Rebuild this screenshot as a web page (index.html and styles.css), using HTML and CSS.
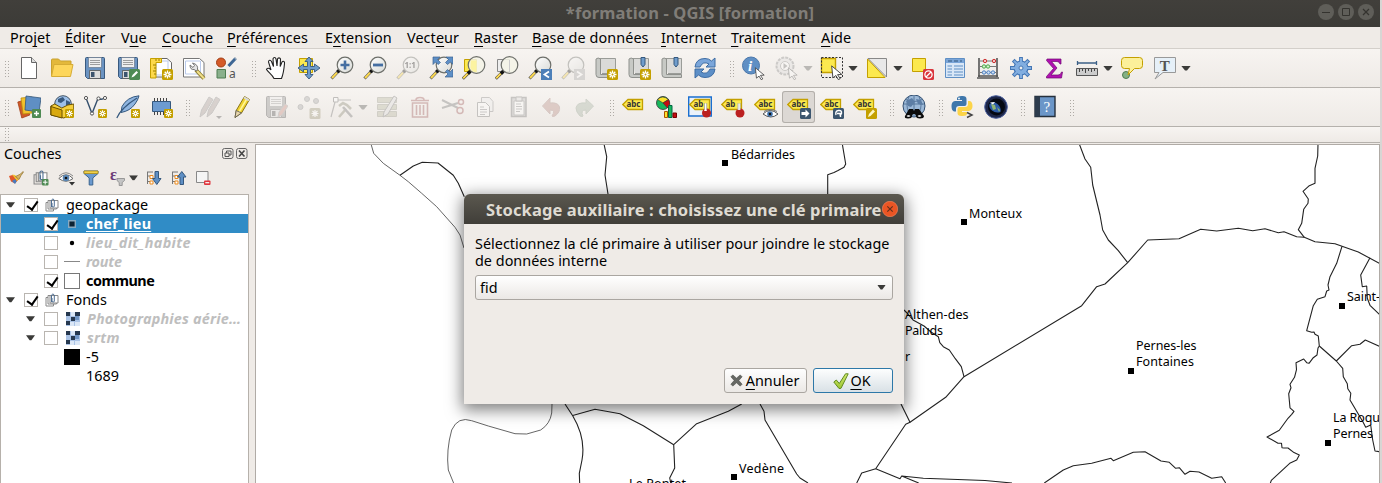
FILE: index.html
```html
<!DOCTYPE html>
<html lang="fr">
<head>
<meta charset="utf-8">
<title>*formation - QGIS [formation]</title>
<link rel="stylesheet" href="styles.css">
</head>
<body>
<svg class="defs" width="0" height="0">
  <defs>
    <linearGradient id="lens" x1="0" y1="0" x2="1" y2="1"><stop offset="0" stop-color="#fff"/><stop offset="1" stop-color="#d8dad6"/></linearGradient>
    <linearGradient id="tick" x1="0" y1="0" x2="0" y2="1"><stop offset="0" stop-color="#d3ea72"/><stop offset="1" stop-color="#9cc531"/></linearGradient>
    <symbol id="star" viewBox="0 0 11 11"><rect width="11" height="11" rx="1.5" fill="#c4a000"/><path d="M5.5 1.5v8M1.5 5.5h8M2.7 2.7l5.6 5.6M8.3 2.7L2.7 8.3" stroke="#fff" stroke-width="1.3"/><circle cx="5.5" cy="5.5" r="1" fill="#c4a000"/></symbol>
    <symbol id="mag" viewBox="0 0 24 24"><path d="M1.500 22.500l7-7.500" stroke="#555" stroke-width="3"/><path d="M2 22l5-5.400" stroke="#fcd94f" stroke-width="2"/><path d="M7.500 16l2-2" stroke="#111" stroke-width="3.400"/><circle cx="15" cy="9" r="7.800" fill="url(#lens)" stroke="#6d6f6a" stroke-width="1.200"/></symbol>
    <symbol id="magbig" viewBox="0 0 24 24"><path d="M.8 22.800l7-7" stroke="#444" stroke-width="3"/><path d="M1.200 22.400l4.500-4.800" stroke="#fcd94f" stroke-width="2"/><path d="M6 17.500l2.500-2.500" stroke="#111" stroke-width="3.400"/><circle cx="14.500" cy="9" r="8.300" fill="#f4f4e8" fill-opacity=".85" stroke="#6d6f6a" stroke-width="1.200"/></symbol>
    <symbol id="floppy" viewBox="0 0 24 24"><path d="M2.500 2.500q0-1 1-1h17q1 0 1 1v20h-17l-2-2z" fill="#6b93c1" stroke="#39597e"/><path d="M5.500 1.500h13v10h-13z" fill="#eee" stroke="#68798c" stroke-width=".7"/><path d="M7 4.500h10M7 6.500h10M7 8.500h10" stroke="#888" stroke-width=".8"/><path d="M6.500 14.500h11v8h-11z" fill="#ddd" stroke="#555" stroke-width=".8"/><path d="M8 16h3.500v5H8z" fill="#3c546e"/></symbol>
    <symbol id="tag" viewBox="0 0 24 24"><path d="M.8 9.500L6 4.500h14.500v10H6z" fill="#fce94f" stroke="#c4a000" stroke-width="1.300"/></symbol>
    <symbol id="cursor" viewBox="0 0 12 14"><path d="M1 .8l9.500 8-4 .2 2.500 3.800-1.800.8L5 9.800 2.200 12z" fill="#fff" stroke="#444" stroke-width=".9"/></symbol>
    <symbol id="book" viewBox="0 0 24 24"><path d="M5 2.500h16.500v15H8" fill="#dadad8" stroke="#9a9c98"/><path d="M2 3q2-2 4.500 0v15.500h15v3H5q-3 0-3-3z" fill="#c7c9c5" stroke="#8f918d"/></symbol>
    <symbol id="group" viewBox="0 0 14 14"><path d="M3 4.500H1v8.500h7.500v-2M5 2.500H3v8.500h8.500V9" fill="none" stroke="#888"/><path d="M5 2.500h8v7.500H5z" fill="#fff" stroke="#888"/><path d="M7 5v3.500q1.200 1 2.300 0V2Q8-.2 6.500 2v7" fill="none" stroke="#4f6f93"/></symbol>
    <symbol id="raster" viewBox="0 0 14 14"><path d="M0 0h14v14H0z" fill="#aac3e6"/><path d="M0 0h4v4H0zM9 0h5v4H9zM5 5h4v4H5zM0 9h4v4H0z" fill="#26384f"/><path d="M5 0h4v4H5zM9 10h5v4H9zM4 10h4v4H4z" fill="#dbe7f6"/><path d="M9 4h4v4H9z" fill="#6f94c4"/></symbol>
    <symbol id="down" viewBox="0 0 10 6"><path d="M0 0h10L6 5.500H4z" fill="#3b3b39"/></symbol>
  </defs>
</svg>

<div class="window">
  <header class="titlebar">
    <span class="title-text">*formation - QGIS [formation]</span>
    <span class="win-buttons">
      <svg viewBox="0 0 16 16"><circle cx="8" cy="8" r="8" fill="#5f5e59"/><path d="M4 8.500h8" stroke="#34332f"/></svg>
      <svg viewBox="0 0 16 16"><circle cx="8" cy="8" r="8" fill="#5f5e59"/><path d="M4.500 4.500h7v7h-7z" fill="none" stroke="#34332f"/></svg>
      <svg viewBox="0 0 16 16"><circle cx="8" cy="8" r="8" fill="#5f5e59"/><path d="M5 5l6 6M11 5l-6 6" stroke="#34332f" stroke-width="1.200"/></svg>
    </span>
  </header>

  <nav class="menubar">
    <span>Pro<u>j</u>et</span><span><u>É</u>diter</span><span>V<u>u</u>e</span><span><u>C</u>ouche</span><span><u>P</u>références</span><span>E<u>x</u>tension</span><span>Vect<u>e</u>ur</span><span><u>R</u>aster</span><span><u>B</u>ase de données</span><span><u>I</u>nternet</span><span><u>T</u>raitement</span><span><u>A</u>ide</span>
  </nav>

  <div class="toolbar">
    <i class="handle"></i>
    <svg class="ic" viewBox="0 0 24 24"><path d="M4.500 1.500h10l5 5v16h-15z" fill="#fff" stroke="#666"/><path d="M14.500 1.500v5h5" fill="#ddd" stroke="#666"/></svg>
    <svg class="ic" viewBox="0 0 24 24"><path d="M1.500 20V4q0-1 1-1h6l2 2h10.500v4" fill="#e3b83b" stroke="#c9a12f"/><path d="M4 8.500h19l-2.500 12h-19z" fill="#fdd65b" stroke="#d6ac35"/></svg>
    <svg class="ic" viewBox="0 0 24 24"><use href="#floppy"/></svg>
    <svg class="ic" viewBox="0 0 24 24"><use href="#floppy"/><rect x="13" y="13" width="11" height="11" rx="1.500" fill="#4e8a53"/><path d="M15.500 21.500l1-2.500 4-4 1.500 1.500-4 4z" fill="#fff"/></svg>
    <svg class="ic" viewBox="0 0 24 24"><path d="M5 2.500h13l4.500 4V21H5z" fill="#fff" stroke="#666"/><path d="M7 5h12v14H7z" fill="none" stroke="#b9c9ea"/><path d="M1.500 2.500h11v4H7V22H1.500z" fill="#fdd94b" stroke="#c4a000"/><path d="M4 9h3M5 12h2M4 15h3M5 18h2M7 3v2M10 3v2" stroke="#9a7c00"/><use href="#star" x="13" y="13" width="11" height="11"/></svg>
    <svg class="ic" viewBox="0 0 24 24"><path d="M1.500 2.500h16l4.500 4V21H1.500z" fill="#fff" stroke="#777"/><path d="M3.500 5h15v13h-15z" fill="none" stroke="#b9c9ea"/><path d="M14 14l8 8.500" stroke="#8d7d2e" stroke-width="4"/><path d="M15 15l7 7.500" stroke="#f1df8a" stroke-width="2"/><path d="M8 9q0 5 4 4.500l2.500 1.500 1-1.500q1-5-5-6.500l2 2.500-1.500 2z" fill="#e4e4e4" stroke="#777"/></svg>
    <svg class="ic" viewBox="0 0 24 24"><circle cx="6" cy="6.500" r="4.500" fill="#d45a28" stroke="#a33e16"/><path d="M13.500 10l7-7.500" stroke="#3f6794" stroke-width="3"/><path d="M20 3l1-1" stroke="#9ab" stroke-width="2.500"/><path d="M2 13.500h8.500v8.500H2z" fill="#8ab08c" stroke="#4f7d52"/><text x="14" y="22" class="g-a">a</text></svg>
    <i class="handle"></i>
    <svg class="ic" viewBox="0 0 24 24"><path d="M10 22.500c-2-4-5-5.500-7.500-9 .5-2 3-1.500 4.500.5L4.500 6c0-2 2-2.500 3-.5l2 5L9 3c.5-2 2.500-2 3 0l1 7 .5-7c.5-1.500 2.500-1.500 3 0l-.3 7.500L18 6c1-1.500 3-.5 2.500 1.500-.5 6-1 10-3 15z" fill="#fff" stroke="#222" stroke-width="1.100"/></svg>
    <svg class="ic" viewBox="0 0 24 24"><path d="M2.500 2.500h13v14h-13z" fill="#fce94f" stroke="#c4a000"/><path d="M12 1l4 4.500h-2.500v5h4V8L23 12l-5.500 4v-2.500h-4v5H16L12 23l-4-4.500h2.500v-5h-4V16L1 12l5.500-4v2.500h4v-5H8z" fill="#6f9ccb" stroke="#35587e" stroke-width=".9"/></svg>
    <svg class="ic" viewBox="0 0 24 24"><use href="#mag"/><path d="M15 4.500v9M10.500 9h9" stroke="#456fa2" stroke-width="2.600"/></svg>
    <svg class="ic" viewBox="0 0 24 24"><use href="#mag"/><path d="M10 9h10" stroke="#456fa2" stroke-width="2.800"/></svg>
    <svg class="ic off" viewBox="0 0 24 24"><use href="#mag"/><text x="8.500" y="12" class="g-one">1:1</text></svg>
    <svg class="ic" viewBox="0 0 24 24"><use href="#mag"/><path d="M4 1h7L8.500 3.500l3 3-2.500 2L6.500 6 4 8.500zM24 1v7.500L21.500 6 18.500 8.500l-2-2 3-3L17 1zM24 21h-8l3-3-2.500-2.500 2-2L21 16l3-3z" fill="#5d8fc7" stroke="#3c638f" stroke-width=".7"/></svg>
    <svg class="ic" viewBox="0 0 24 24"><path d="M2.500 3.500h12v12h-12z" fill="#fce94f" stroke="#c4a000"/><use href="#magbig"/><path d="M9 4.500h5.500v12q-5-1-6-5z" fill="#fcf3a0"/></svg>
    <svg class="ic" viewBox="0 0 24 24"><path d="M2.500 3.500h12v12h-12z" fill="#eee" stroke="#888"/><use href="#magbig"/><path d="M14.500 4v12" stroke="#ccc"/></svg>
    <svg class="ic" viewBox="0 0 24 24"><use href="#mag"/><path d="M13 13h11v11H13z" fill="#4c7fb8"/><path d="M21 15.500L16.500 18.500l4.500 3" fill="none" stroke="#fff" stroke-width="1.800"/></svg>
    <svg class="ic off" viewBox="0 0 24 24"><use href="#mag"/><path d="M13 13h11v11H13z" fill="#aaa"/><path d="M16 15.500l4.500 3-4.500 3" fill="none" stroke="#fff" stroke-width="1.800"/></svg>
    <svg class="ic" viewBox="0 0 24 24"><use href="#book"/><use href="#star" x="13" y="13" width="11" height="11"/></svg>
    <svg class="ic" viewBox="0 0 24 24"><use href="#book"/><path d="M14 1.500h4v7l-2 2.500-2-2.500z" fill="#6f9ccb" stroke="#35587e"/><use href="#star" x="13" y="13" width="11" height="11"/></svg>
    <svg class="ic" viewBox="0 0 24 24"><use href="#book"/><path d="M14 1.500h4v7l-2 2.500-2-2.500z" fill="#6f9ccb" stroke="#35587e"/></svg>
    <svg class="ic" viewBox="0 0 24 24"><path d="M2 11Q3 2.500 12 2.500q4 0 6.500 2.500L22 2v9h-9l3-3q-6-3.500-9 3z" fill="#7ba6da" stroke="#3d6ca3"/><path d="M22 13q-1 8.500-10 8.500-4 0-6.500-2.500L2 22v-9h9l-3 3q6 3.500 9-3z" fill="#5d8fc7" stroke="#3d6ca3"/></svg>
    <i class="handle"></i>
    <svg class="ic" viewBox="0 0 24 24"><circle cx="9" cy="9.500" r="8.500" fill="#5f8fc4" stroke="#4b78ab"/><text x="6" y="15" class="g-i">i</text><use href="#cursor" x="12" y="11" width="12" height="13"/></svg>
    <svg class="ic off" viewBox="0 0 24 24"><circle cx="10" cy="10" r="8.500" fill="#ddd" stroke="#888" stroke-width="2" stroke-dasharray="3 1"/><circle cx="10" cy="10" r="4.500" fill="#fff" stroke="#888"/><path d="M8.500 7l4 3-4 3z" fill="#777"/><use href="#cursor" x="12" y="11" width="12" height="13"/></svg>
    <i class="arrow faded"></i>
    <svg class="ic" viewBox="0 0 24 24"><path d="M1.500 2.500h14v14h-14z" fill="#fce94f" stroke="#c4a000" stroke-width="1.400"/><path d="M1.500 1.500h21v20h-21z" fill="none" stroke="#333" stroke-dasharray="2 1.500"/><use href="#cursor" x="10" y="9" width="14" height="15"/></svg>
    <i class="arrow"></i>
    <svg class="ic" viewBox="0 0 24 24"><path d="M3 2.500h18.500v18.500z" fill="#e8e8e8" stroke="#888"/><path d="M2.500 3v18.500H20z" fill="#fce94f" stroke="#c4a000"/></svg>
    <i class="arrow"></i>
    <svg class="ic" viewBox="0 0 24 24"><path d="M2.500 2.500h13v13h-13z" fill="#fce94f" stroke="#c4a000"/><rect x="13" y="13" width="11" height="11" rx="1.500" fill="#d9343b"/><circle cx="18.500" cy="18.500" r="3.600" fill="#d9343b" stroke="#fff" stroke-width="1.300"/><path d="M16 21l5-5" stroke="#fff" stroke-width="1.300"/></svg>
    <svg class="ic" viewBox="0 0 24 24"><path d="M2.500 2.500h19v19h-19z" fill="#d9e7f7" stroke="#5f8fc4"/><path d="M3 3h18v4H3z" fill="#7aa5d8"/><path d="M5 5h4M11 5h4M17 5h2" stroke="#35587e"/><path d="M4.500 10h4.500M11 10h9M4.500 13h4.500M11 13h9M4.500 16h4.500M11 16h9M4.500 19h4.500M11 19h9" stroke="#5f8fc4"/></svg>
    <svg class="ic" viewBox="0 0 24 24"><path d="M3 2v19M21 2v19M1 22h22M2 20h20" stroke="#555" stroke-width="1.600"/><path d="M3 5h18M3 10.500h18M3 16.500h18" stroke="#777"/><g fill="#f3c2c2" stroke="#c33"><circle cx="9" cy="5" r="1.700"/><circle cx="18" cy="5" r="1.700"/></g><g fill="#d2f3cf" stroke="#4aa546"><circle cx="8" cy="10.500" r="1.700"/><circle cx="12" cy="10.500" r="1.700"/></g><g fill="#cfe0f5" stroke="#4b7fc0"><circle cx="8" cy="16.500" r="1.700"/><circle cx="12.500" cy="16.500" r="1.700"/><circle cx="17" cy="16.500" r="1.700"/></g></svg>
    <svg class="ic" viewBox="0 0 24 24"><path d="M12 1v22M1 12h22M4.200 4.200l15.600 15.600M19.800 4.200L4.200 19.800" stroke="#4577b5" stroke-width="3.800"/><circle cx="12" cy="12" r="7" fill="#82aee0" stroke="#4577b5" stroke-width="1.200"/><path d="M12 2v20M2 12h20M4.900 4.900l14.200 14.200M19.100 4.900L4.900 19.100" stroke="#82aee0" stroke-width="2"/><circle cx="12" cy="12" r="2" fill="#f4f1ed" stroke="#4577b5"/></svg>
    <svg class="ic" viewBox="0 0 24 24"><path d="M5 3h14v5h-1q-.5-2.500-3-2.500H9.500L15 12l-6 7h7q3 0 3.500-3h1l-1 6H4.500v-1.500l7-8-7-8z" fill="#b010b0" stroke="#6f0a70" stroke-width=".7"/></svg>
    <svg class="ic" viewBox="0 0 24 24"><path d="M2.500 5v4M21.500 5v4M2.500 7h19" stroke="#3c6087" stroke-width="1.300"/><path d="M1.500 12.500h21v7h-21z" fill="#ccc" stroke="#555"/><path d="M4.500 13v3M7.500 13v2M10.500 13v4M13.500 13v2M16.500 13v3M19.500 13v2" stroke="#444"/></svg>
    <i class="arrow"></i>
    <svg class="ic" viewBox="0 0 24 24"><circle cx="6" cy="19" r="3.500" fill="#84b185" stroke="#4f7d52"/><path d="M4.500 1.500h15q3 0 3 3v5q0 3-3 3h-5L8 19l1.500-6.500h-5q-3 0-3-3v-5q0-3 3-3z" fill="#fcf09a" stroke="#c4a000"/></svg>
    <svg class="ic" viewBox="0 0 24 24"><path d="M1.500 1.500h21v15H10l-8 6.500 4-6.500H1.500z" fill="#e6f0f8" stroke="#999"/><text x="6.800" y="14.500" class="g-t">T</text></svg>
    <i class="arrow"></i>
  </div>

  <div class="toolbar">
    <i class="handle"></i>
    <svg class="ic" viewBox="0 0 24 24"><path d="M.8 7l7-2 5 15-8 3z" fill="#cf5a28" stroke="#a33e16" stroke-width=".8"/><path d="M4 3l11-1v16l-9 1z" fill="#f3c12c" stroke="#b98d0c" stroke-width=".8"/><path d="M9 1l15 2-2 14-14-2z" fill="#5f8fc4" stroke="#35587e" stroke-width=".8"/><rect x="15" y="14" width="9" height="9" rx="1" fill="#4e8a53"/><path d="M19.500 16v5M17 18.500h5" stroke="#fff" stroke-width="1.400"/></svg>
    <svg class="ic" viewBox="0 0 24 24"><circle cx="13" cy="9" r="8.300" fill="#9cbfe8" stroke="#456"/><path d="M8 4l5-2 2 3-4 3-3-1zM16 5l4 2v4l-4-1z" fill="#39597e"/><path d="M.8 11l4-2 7 4 6-3 6-1v9l-10 5L.8 20z" fill="#f5cf3d" stroke="#6b5200"/><path d="M1 11.500l11 3.500v8L1 20z" fill="#d9a90e" stroke="#6b5200"/><use href="#star" x="15" y="14" width="9" height="9"/></svg>
    <svg class="ic" viewBox="0 0 24 24"><path d="M3 3l6 15.500 6-15q4 2 7-1" fill="none" stroke="#35506e" stroke-width="1.400"/><g fill="#fff" stroke="#555"><circle cx="3" cy="3" r="1.600"/><circle cx="9" cy="18.500" r="1.600"/><circle cx="15.500" cy="3.500" r="1.600"/><circle cx="22" cy="3" r="1.600"/></g><use href="#star" x="15" y="14" width="9" height="9"/></svg>
    <svg class="ic" viewBox="0 0 24 24"><path d="M23 .8Q11 2 6 11.500l-1 6Q14 16 19 9q3-4 4-8.200z" fill="#8fb5e0" stroke="#35587e"/><path d="M.8 23Q5 13 21 3" fill="none" stroke="#35587e" stroke-width="1.200"/><use href="#star" x="15" y="14" width="9" height="9"/></svg>
    <svg class="ic" viewBox="0 0 24 24"><path d="M5.500 3v17M8.500 3v17M11.500 3v17M14.500 3v17M17.500 3v17" stroke="#444"/><path d="M3.500 6.500h18v10h-18z" fill="#6d9bd0" stroke="#35587e"/><use href="#star" x="15" y="14" width="9" height="9"/></svg>
    <i class="handle"></i>
    <svg class="ic off" viewBox="0 0 24 24"><path d="M2 22l1.500-7L11 2l4 2.500L7 18zM9 22l1.500-7L18 2l4 2.500L14 18z" fill="#a89c98" stroke="#888"/><path d="M18 21h6l-3 3z" fill="#555"/></svg>
    <svg class="ic" viewBox="0 0 24 24"><path d="M4 22.500l1.200-7L13.500 1.500l5 3L10.500 18z" fill="#f0d22f" stroke="#8a7415"/><path d="M16 3.500L8 17" stroke="#fff59a" stroke-width="1.500"/><path d="M13.500 1.500l5 3-1 1.800-5-3z" fill="#d8d8d8"/><path d="M5.200 15.500l5.300 2.500L4 22.500z" fill="#e8d6ac" stroke="#555" stroke-width=".8"/></svg>
    <svg class="ic off" viewBox="0 0 24 24"><g class="gray"><use href="#floppy"/></g><path d="M14 22l1-5 6-8 3 2-6 9z" fill="#c98b80" stroke="#999"/></svg>
    <svg class="ic off" viewBox="0 0 24 24"><g fill="#aaa" stroke="#888"><circle cx="10" cy="4" r="2.500"/><circle cx="19" cy="6" r="2.500"/><circle cx="3.500" cy="12" r="2.500"/></g><rect x="12.500" y="13" width="11" height="11" rx="1.500" fill="#9b9678"/><path d="M18 15v7M14.500 18.500h7M15.500 16l5 5M20.500 16l-5 5" stroke="#fff" stroke-width="1.200"/></svg>
    <svg class="ic off" viewBox="0 0 24 24"><path d="M5 7L1 22M6 5h15" fill="none" stroke="#777" stroke-width="1.200"/><path d="M3.500 2.500h4.500v4.500H3.500z" fill="#fff" stroke="#666"/><path d="M9 22l7-8M9 11l4-3 4 2 4 4" stroke="#8d8b78" stroke-width="2.600" fill="none"/><path d="M13 12l9 10" stroke="#777" stroke-width="2.600"/></svg>
    <i class="arrow faded"></i>
    <svg class="ic off" viewBox="0 0 24 24"><path d="M2.500 2.500h19v5h-19zM2.500 9.500h19v5h-19zM2.500 16.500h19v5h-19z" fill="#b8b8a0" stroke="#99998a"/><path d="M8 22l1-5L19 1l3 2-9 16z" fill="#ddd" stroke="#777"/></svg>
    <svg class="ic off" viewBox="0 0 24 24"><path d="M4.500 8h15v14h-15zM8.500 10v10M12 10v10M15.500 10v10M3 5.500h18M8 5q0-2.500 4-2.500t4 2.500" fill="none" stroke="#a05c5c" stroke-width="1.600"/></svg>
    <svg class="ic off" viewBox="0 0 24 24"><path d="M1 5l16 8M1 13l16-5" stroke="#777" stroke-width="2"/><circle cx="20" cy="7" r="2.500" fill="none" stroke="#a05c5c" stroke-width="1.500"/><circle cx="19" cy="15.500" r="3" fill="none" stroke="#a05c5c" stroke-width="1.500"/></svg>
    <svg class="ic off" viewBox="0 0 24 24"><path d="M7.500 2.500h8l3.500 4v10H7.500z" fill="#eee" stroke="#888"/><path d="M3.500 7.500h8l4 4v10h-12z" fill="#fff" stroke="#777"/><path d="M6 12h4M6 14.500h7M6 17h7M6 19.500h5" stroke="#888"/></svg>
    <svg class="ic off" viewBox="0 0 24 24"><path d="M4.500 2.500h14.500v19H4.500z" fill="#bbb" stroke="#777" stroke-width="1.500"/><path d="M7 6h10v14H7z" fill="#fff" stroke="#888"/><path d="M9 2h6v4H9z" fill="#ddd" stroke="#777"/><path d="M9 9h5M9 11.500h6M9 14h6M9 16.500h4" stroke="#888"/></svg>
    <svg class="ic off" viewBox="0 0 24 24"><path d="M10 3v5q8-1 9.500 4 1 5-4.500 9-3 1-3 0 4-6-2-6v4L2.500 11z" fill="#b98c84" stroke="#a5857f"/></svg>
    <svg class="ic off" viewBox="0 0 24 24"><path d="M13 4v4q-9-1-10 5 0 4 4 8 3 1 3 0-3-6 3-6v4l7.500-8z" fill="#a6b3a3" stroke="#93a08f"/></svg>
    <i class="handle"></i>
    <svg class="ic" viewBox="0 0 24 24"><use href="#tag"/><text x="4.500" y="12" class="g-abc">abc</text></svg>
    <svg class="ic" viewBox="0 0 24 24"><circle cx="8" cy="8" r="6.500" fill="#17b75c" stroke="#333" stroke-width=".8"/><path d="M8 8L2.500 4.500Q7.500-.5 13.500 4.500z" fill="#fce22c" stroke="#333" stroke-width=".6"/><path d="M8 8l5.500-3.500Q16.500 10 12.500 13z" fill="#c30d12" stroke="#333" stroke-width=".6"/><path d="M9.500 16.500h3v6h-3z" fill="#fce22c" stroke="#a50"/><path d="M13.500 10.500h3.500v12h-3.500z" fill="#17b75c" stroke="#064"/><path d="M18 18h3.500v4.500H18z" fill="#c30d12" stroke="#700"/></svg>
    <svg class="ic" viewBox="0 0 24 24"><path d="M.7 2h22.600v19H.7z" fill="#eaf2fb" stroke="#1a6fd0" stroke-width="1.400"/><use href="#tag" x="1"/><text x="5.500" y="12" class="g-abc">ab</text><circle cx="18.500" cy="18" r="4.500" fill="#bb2020"/><path d="M17.500 16V8.500" stroke="#fff" stroke-width="2.500"/><path d="M16.500 15V8M18.700 15V8" stroke="#999" stroke-width=".7"/></svg>
    <svg class="ic" viewBox="0 0 24 24"><use href="#tag"/><text x="4.500" y="12" class="g-abc">ab</text><circle cx="19" cy="18" r="4.500" fill="#bb2020"/><path d="M18 15V8.500" stroke="#fff" stroke-width="2.500"/><path d="M17 15V8M19.200 15V8" stroke="#999" stroke-width=".7"/></svg>
    <svg class="ic" viewBox="0 0 24 24"><use href="#tag"/><text x="4.500" y="12" class="g-abc">abc</text><path d="M9 19q7-7 15 0-7 6-15 0z" fill="#fff" stroke="#555"/><circle cx="16" cy="19" r="2.800" fill="#3f73ad"/><circle cx="16" cy="19" r="1.200" fill="#111"/><path d="M10 16.500q6-4 13 0" fill="none" stroke="#777"/></svg>
    <svg class="ic pressed" viewBox="0 0 24 24"><use href="#tag"/><text x="4.500" y="12" class="g-abc">abc</text><rect x="13" y="13" width="11" height="11" rx="1.500" fill="#3c566f"/><path d="M14.500 17h4v-2.500l4 4-4 4V20h-4z" fill="#fff"/></svg>
    <svg class="ic" viewBox="0 0 24 24"><use href="#tag"/><text x="4.500" y="12" class="g-abc">abc</text><rect x="13" y="13" width="11" height="11" rx="1.500" fill="#3c566f"/><path d="M16 20q-1-4 2.500-4.500t3 3q-.5 1.500-2 1.500M17 18.500h3.500v3.500" fill="none" stroke="#fff" stroke-width="1.400"/></svg>
    <svg class="ic" viewBox="0 0 24 24"><use href="#tag"/><text x="4.500" y="12" class="g-abc">abc</text><rect x="13" y="13" width="11" height="11" rx="1.500" fill="#c4a000"/><path d="M15 22l1-3 4-4.500 2 2-4.500 4.500z" fill="#fdf6c4"/></svg>
    <i class="handle"></i>
    <svg class="ic" viewBox="0 0 24 24"><circle cx="12" cy="11" r="11" fill="#9cb9d8" stroke="#334f70"/><path d="M2 9h20M12 1v20M4 4.500q8 4 16 0M7 1.500q-4 9 0 17M17 1.500q4 9 0 17" fill="none" stroke="#4a6a8f" stroke-width=".8"/><path d="M4 6l6-3 3 4-4 5-3-1zM14 4l5 1 2 5-5-1z" fill="#5d7ea5"/><path d="M7 14h4l1 2 1-2h4l5 7q0 2.500-4 2.500T14 21l-1-2h-2l-1 2q0 2.500-4 2.500T3 21z" fill="#0a0a0a"/><path d="M4.500 21q2-2 4 0-2 2-4 0zM15.500 21q2-2 4 0-2 2-4 0z" fill="#ddd"/></svg>
    <i class="handle"></i>
    <svg class="ic" viewBox="0 0 24 24"><path d="M10.500 1q5-.5 5 3v5q0 2-2 2H8q-3 0-3 3v2.500H3q-2.500-1-2.500-5.500T4 6h7V5H6V3.500Q6 1 10.500 1z" fill="#3f77ab"/><path d="M11.500 21q-5 .5-5-3v-4q0-2 2-2H14q3 0 3-3V6h2q2.500 1 2.500 5T18 16h-7v1h5v1.500q0 2.500-4.500 2.500z" fill="#fcd448"/><circle cx="8" cy="3.500" r=".9" fill="#fff"/><path d="M16 17.500l5 2.500-5 2.500" fill="none" stroke="#444" stroke-width="1.500"/></svg>
    <svg class="ic" viewBox="0 0 24 24"><circle cx="12" cy="12" r="11.300" fill="#1d2648" stroke="#4a5f9e"/><circle cx="12.500" cy="12" r="8.500" fill="#050912"/><path d="M5.500 9q4-3.500 8 0t3 8q-5 1.500-8.500-1.500T5.500 9z" fill="#2d5ca6"/><path d="M7 9l4 1 1 4-3 1zM13 12l3 3-1 2z" fill="#8fb572"/><path d="M6 7.500l5-.5-2 2.500z" fill="#fff"/></svg>
    <i class="handle"></i>
    <svg class="ic" viewBox="0 0 24 24"><path d="M2 1.500h20v20H2z" fill="#6b96c8" stroke="#26303c" stroke-width="1.400"/><path d="M2 1.500h5v20H2z" fill="#2d3c4d"/><text x="10.500" y="16.500" class="g-q">?</text></svg>
    <i class="handle"></i>
  </div>

  <div class="toolbar slim"><i class="handle"></i></div>

  <div class="main">
    <aside class="panel">
      <div class="panel-head">
        <span>Couches</span>
        <svg viewBox="0 0 12 12"><rect x=".5" y=".5" width="10.500" height="10" rx="2" fill="none" stroke="#666"/><path d="M4.500 5V3H9v4H7M3 5h4v3.500H3z" fill="none" stroke="#555"/></svg>
        <svg viewBox="0 0 12 12"><rect x=".5" y=".5" width="10.500" height="10" rx="2" fill="none" stroke="#666"/><path d="M3 2.500l5.500 6M8.500 2.500L3 8.500" stroke="#444" stroke-width="1.600"/></svg>
      </div>
      <div class="panel-tools">
        <svg viewBox="0 0 16 16"><path d="M1 6l3.500-1 6 4.500L7 13.500l-4-2z" fill="#e2582b"/><path d="M4 4.500l3 .5 4 4-2 2z" fill="#f1c232"/><path d="M4 11l3.500-2 1 2.500L7 14z" fill="#467cc0"/><path d="M7.500 6.500l5-2.500L15 1.500l.5.5L13 5.500l-2 4z" fill="#d7b463" stroke="#8f7334" stroke-width=".7"/></svg>
        <svg viewBox="0 0 16 16"><use href="#group" x="0" y="0" width="15" height="15"/><rect x="9" y="9" width="6.500" height="6.500" rx="1" fill="#4e8a53"/><path d="M12.200 10v4.500M10 12.200h4.500" stroke="#fff"/></svg>
        <svg class="w18" viewBox="0 0 18 16"><path d="M.8 8.500Q8 1 15 8.500q-7 5.500-14.200 0z" fill="#fff" stroke="#666"/><circle cx="8" cy="8" r="3.300" fill="#5b87b5"/><circle cx="8" cy="8" r="1.300" fill="#111"/><path d="M1 6Q8-.5 15 6" fill="none" stroke="#888"/><path d="M11 12h6l-3 3.500z" fill="#333"/></svg>
        <svg viewBox="0 0 16 16"><path d="M1 1h14v2.500L9.800 8v7H6.200V8L1 3.500z" fill="#6a99cf" stroke="#3a648f"/><path d="M1 1h14v2.500H1z" fill="#f0d24d" stroke="#b08d12" stroke-width=".8"/></svg>
        <svg class="expr" viewBox="0 0 16 16"><text x="1" y="9.500" class="g-e">ε</text><path d="M8 8.500h7.500v2l-2.300 2v3h-3v-3L8 10.500z" fill="#c4c4c4" stroke="#888" stroke-width=".8"/></svg>
        <svg class="drop" viewBox="0 0 10 6"><use href="#down"/></svg>
        <svg viewBox="0 0 16 16"><path d="M1.500 2v12M1 2h6M2 6h2M2 11.500h2" stroke="#777"/><path d="M4 5.500h3v3H4zM4 11h3v3H4z" fill="#fff" stroke="#ed8b1c"/><path d="M9 1.500h3.500v7H15L10.800 14.500 6.500 8.500H9z" fill="#5f8fc4" stroke="#35587e"/></svg>
        <svg viewBox="0 0 16 16"><path d="M1.500 2v12M1 2h6M2 6h2M2 11.500h2" stroke="#777"/><path d="M4 5.500h3v3H4zM4 11h3v3H4z" fill="#fff" stroke="#ed8b1c"/><path d="M9 14.500V7H6.500l4.300-5.500L15 7h-2.500v7.500z" fill="#5f8fc4" stroke="#35587e"/></svg>
        <svg viewBox="0 0 16 16"><path d="M.5 1.500h11.500v11H.5z" fill="#f5f5f5" stroke="#888"/><rect x="8" y="10.500" width="6.500" height="4.500" rx="1" fill="#e0353c"/><path d="M9.300 12.700h4" stroke="#fff" stroke-width="1.200"/></svg>
      </div>
      <div class="tree">
        <div class="row"><svg class="twist"><use href="#down"/></svg><b class="check on"></b><svg class="gi"><use href="#group"/></svg><span>geopackage</span></div>
        <div class="row child sel"><b class="check on"></b><i class="sym"><svg viewBox="0 0 8 8"><path d="M.7.700h6.600v6.600H.7z" fill="#0d2233" stroke="#8aa9bf" stroke-width="1.400"/></svg></i><span class="bold wide">chef_lieu</span></div>
        <div class="row child"><b class="check"></b><i class="sym"><svg viewBox="0 0 8 8"><circle cx="4" cy="4" r="2.200"/></svg></i><span class="dim wide">lieu_dit_habite</span></div>
        <div class="row child"><b class="check"></b><i class="sym line"></i><span class="dim">route</span></div>
        <div class="row child"><b class="check on"></b><i class="sym box"></i><span class="bold">commune</span></div>
        <div class="row"><svg class="twist"><use href="#down"/></svg><b class="check on"></b><svg class="gi"><use href="#group"/></svg><span>Fonds</span></div>
        <div class="row sub"><svg class="twist"><use href="#down"/></svg><b class="check"></b><svg class="gi"><use href="#raster"/></svg><span class="dim">Photographies aérie…</span></div>
        <div class="row sub"><svg class="twist"><use href="#down"/></svg><b class="check"></b><svg class="gi"><use href="#raster"/></svg><span class="dim">srtm</span></div>
        <div class="row leaf"><i class="sym black"></i><span>-5</span></div>
        <div class="row leaf"><i class="sym"></i><span>1689</span></div>
      </div>
    </aside>

    <section class="map">
      <svg viewBox="256 145 1124 338">
        <g class="thin">
          <path d="M371 144l2.700 9.300 9.600 10 16.700 12 8.300 6.400 13.400 11.600 15 13.400 18.300 20.600 5 7.700 4 13"/>
          <path d="M552 404l-.3 9Q550 424 540.700 430L526.700 434 515 433.700 488.300 426 471.700 420.700Q458 416 451.700 430 446 450 448.300 470L454 484"/>
        </g>
        <g class="border">
          <path d="M400 175.300l13.300-9.300 9-3.700 15.700.7 15.300 12.300 5 8 6 13.400"/>
          <path d="M604 144l2.700 12.700L605 175l3 19"/>
          <path d="M842.300 144l3.400 20-1.700 3.300-6 3.200-4 2-6.300 2.200V195"/>
          <path d="M565 404l7.700 11.700Q586 438 582 460L579.300 473.300 579.700 484"/>
          <path d="M572.700 415.500L595 409.300l25 4.400 23.300 12 30.400 19 23-21 31.600-12.400 13.400-7.300M673.700 444.700l1 23.300-5 10 1.300 6"/>
          <path d="M760 404l4 7.300 1 8.700 31.700 54 3.300 4 8 5"/>
          <path d="M901 404l9 18.300-4.300 2-30 44.400-14 4.300-5 10M875.700 468.700L900 478.700l1.700-2.700 21.600 2.300 61.700 2.200 27 2.500M901.700 476l17 7"/>
          <path d="M910 422.300l35.700-25 18.300-20.600 117.700-71 15-19 8.300-2.700 22.700-21.300 20-22.700 31.300-1.300 21.700-9.400 16 1.700 21.600-2.700 14.400 2.400 12.300-2 13.300 4 5.700-1 12.700 5 7.600.6 10.700 4.400 20 2 7 2.600 16.300 5.700 21 11.300"/>
          <path d="M1079.300 144l5.700 15 5.700 8.300 2 17.700 7.300 30 2.700 15 5.600 10 10 10.700 9.400 12"/>
          <path d="M1318 144l-.3 12-2.700 12.300v15l-5.700 2.400-6.300 5.600 5.300 7.700-.3 4.300-4.300 6-2 14-3.400 6.400 6 7.600"/>
          <path d="M1342 246.300l-5.300 17-6.700 13.400-2 8.300 1 5-2.300 1-1.700 5.700-7.700 2.600-4 6.400-6.600 25 5 1.600 2.300-.3 1 2.300 3.300 1.700 1 10-1.300 2-1 7-3.700 2.700-4.300 5.600-2.300-.6-3-3.700-7.700 3.700.5 7-2 7.600-4.500 7 1 3.500-2.300 6 1.300 14 4 3.500-2.300 3-3.700 4-8.700 12-12.300 6.700 11 6.300h3.500l.5 4.400 2 .3h4l6 4.600 5.300 2.400-2.600 5-7 3.300-18.400 17-1.300 4"/>
          <path d="M1319.300 346l17 15 15.400-15.300 8.300-1.400 5.300-4.300 14 6.300M1336.300 361l6.400 7.300.6 8.400 4 7 .5 5 3 4.600-.8 6.700 13 22 2.700 5.300 5-2.300 2 15 2.300 11 4.300.7"/>
          <path d="M1370 257.700l-9.300 17.300 1.600 11.700 4.400-.7.600 12.300 2.700 7L1380 315"/>
          <path d="M1044.300 483l19-13 10-4.300 18.400-2.400 19.300-5 2.300 2.400 20-8.400 11.700-.6 16 9.300 8.300 1.300 6.400 6 3.600-.6 5.700 6.600 5-3 9 .7 12.700 6.300 10-1.600 4 6.300"/>
          <path d="M904 310l3 3 6 7 11 6 7 6 7.300 4.700 1.500 6 3.500 4 6 3.300 6 8.700 6 8 2.700 10"/>
        </g>
        <path d="M722 160h6v6h-6zM961 219h6v6h-6zM1128 368h6v6h-6zM1339 303h6v6h-6zM1325 440h6v6h-6zM731 474h6v6h-6z"/>
        <g class="labels">
          <text x="731" y="159" textLength="64">Bédarrides</text>
          <text x="969" y="218" textLength="53">Monteux</text>
          <text x="905" y="319" textLength="63.500">Althen-des</text>
          <text x="905" y="335" textLength="38">Paluds</text>
          <text x="905" y="361">r</text>
          <text x="1136" y="350" textLength="60.500">Pernes-les</text>
          <text x="1136" y="366" textLength="58">Fontaines</text>
          <text x="1347" y="301" textLength="33">Saint-</text>
          <text x="1333" y="422" textLength="47">La Roqu</text>
          <text x="1333" y="438" textLength="40">Pernes</text>
          <text x="739" y="473" textLength="45">Vedène</text>
          <text x="629" y="488" textLength="57">Le Pontet</text>
        </g>
      </svg>
    </section>
  </div>
</div>

<div class="dialog">
  <div class="dialog-title"><span>Stockage auxiliaire : choisissez une clé primaire</span>
    <svg viewBox="0 0 16 16"><circle cx="8" cy="8" r="7.700" fill="#ea5524" stroke="#f58a63" stroke-width=".6"/><path d="M5.300 5.300l5.400 5.400M10.700 5.300l-5.400 5.400" stroke="#63301c" stroke-width="1.200"/></svg>
  </div>
  <div class="dialog-body">
    <p>Sélectionnez la clé primaire à utiliser pour joindre le stockage<br>de données interne</p>
    <div class="combo"><span>fid</span><svg viewBox="0 0 10 6"><use href="#down"/></svg></div>
    <div class="buttons">
      <div class="btn"><svg viewBox="0 0 14 14"><path d="M3 1l4 3.500L11 1l2 2-3.500 4L13 11l-2 2-4-3.500L3 13l-2-2 3.500-4L1 3z" fill="#666864" stroke="#4e504c" stroke-width=".7"/></svg><span><u>A</u>nnuler</span></div>
      <div class="btn ok"><svg viewBox="0 0 16 16"><path d="M.8 9l2.500-2 3 3.500L12.500.8h2.700L8 15.300 6 15.500z" fill="url(#tick)" stroke="#5f8a1e"/></svg><span><u>O</u>K</span></div>
    </div>
  </div>
</div>
</body>
</html>
```
FILE: styles.css
```css
* { box-sizing: border-box; }
body {
  margin: 0;
  width: 1382px;
  height: 483px;
  overflow: hidden;
  background: #d8d6d4;
  color: #000;
  font: 14.4px/19px "Noto Sans", "Open Sans", sans-serif;
}
svg { display: block; flex: none; }
.defs { position: absolute; }
u { text-decoration: underline; text-underline-offset: 3px; text-decoration-thickness: 1px; text-decoration-skip-ink: none; }

.window { width: 1380px; height: 483px; display: flex; flex-direction: column; background: #efebe7; }
.titlebar {
  height: 27px;
  flex: none;
  display: grid;
  grid-template-columns: 1fr auto 1fr;
  align-items: center;
  padding-bottom: 3px;
  background: linear-gradient(#413f3b, #3c3b37);
  color: #807d78;
  font-size: 16.5px;
  font-weight: 700;
}
.title-text { grid-column: 2; letter-spacing: .12px; }
.win-buttons { display: flex; gap: 4px; justify-content: flex-end; padding-right: 6px; }
.win-buttons svg { width: 16px; height: 16px; }

.menubar {
  height: 22px;
  flex: none;
  display: grid;
  grid-template-columns: 55px 56px 41px 65px 98px 82px 67px 58px 129px 70px 90px auto;
  padding-left: 10px;
  line-height: 21px;
  letter-spacing: .08px;
  background: #efebe7;
  border-bottom: 1px solid #d3cfca;
  white-space: nowrap;
}

.toolbar {
  height: 39px;
  flex: none;
  display: flex;
  align-items: center;
  background: linear-gradient(#f7f4f1, #eeeae6);
  border-bottom: 1px solid #b5b1ac;
}
.toolbar.slim { height: 16px; }
.ic { width: 33px; height: 32px; padding: 4px 4px 4px 5px; }
.off { opacity: .36; }
.gray { filter: grayscale(1); }
.pressed { background: #dcd8d4; border-radius: 3px; box-shadow: inset 0 0 0 1px #b3afaa; }
.handle { width: 16px; height: 17px; flex: none; }
.handle::before {
  content: "";
  display: block;
  width: 6px;
  height: 17px;
  margin-left: 8px;
  background: radial-gradient(circle, #aeaaa5 .8px, transparent 1px) 0 0 / 3px 3px;
}
.handle:first-child { width: 12px; }
.handle:first-child::before { margin-left: 4px; }
.slim .handle, .slim .handle::before { height: 15px; }
.arrow { width: 12px; flex: none; }
.arrow::before {
  content: "";
  display: block;
  width: 10px;
  height: 5px;
  background: #3b3b39;
  clip-path: polygon(0 0, 100% 0, 60% 100%, 40% 100%);
}
.faded { opacity: .3; }

.g-a { font: 12px "Noto Sans", sans-serif; fill: #555; }
.g-one { font: bold 8px "Noto Sans", sans-serif; }
.g-i { font: italic bold 15px "Liberation Serif", serif; fill: #fff; }
.g-t { font: bold 15px "Liberation Serif", serif; fill: #555; }
.g-q { font: 15px "Liberation Serif", serif; fill: #fff; }
.g-abc { font: bold 8px "Noto Sans", sans-serif; fill: #333; }
.g-e { font: bold 16px "Liberation Serif", serif; fill: #6c3b78; }

.main { flex: 1; display: flex; padding-top: 1px; min-height: 0; }
.panel { width: 249px; flex: none; display: flex; flex-direction: column; }
.panel-head { height: 19px; display: flex; align-items: center; gap: 2px; padding: 0 1px 0 4px; }
.panel-head span { flex: 1; }
.panel-head svg { width: 12px; height: 12px; }
.panel-tools { height: 31px; display: flex; align-items: center; padding: 0 0 1px 8px; gap: 9px; }
.panel-tools svg { width: 16px; height: 16px; }
.panel-tools .w18 { width: 18px; margin-right: -2px; }
.panel-tools .expr { overflow: visible; margin-left: 1px; }
.panel-tools .drop { width: 9px; height: 6px; margin: 0 -1px 0 -5px; }
.panel-tools .drop + svg { margin-left: 0; }
.tree { flex: 1; background: #fff; border: 1px solid #b6b1ab; border-bottom: 0; }
.row { height: 19px; display: flex; align-items: center; padding-left: 5px; white-space: nowrap; }
.twist { width: 9px; height: 6px; margin-right: 9px; }
.gi { width: 14px; height: 14px; margin: 0 7px 0 7px; }
.row span { line-height: 19px; }
.row.sub { padding-left: 25px; }
.row.sub .check { margin: 0; }
.row.sub .gi { margin: 0 7px 0 8px; }
.row.child { padding-left: 43px; }
.row.leaf { padding-left: 63px; }
.leaf .sym { margin-left: 0; }
.check { width: 14px; height: 14px; flex: none; background: #fff; border: 1px solid #b9b5b0; }
.row:not(.child):not(.sub) .check { margin-right: 0; }
.check.on::before {
  content: "";
  display: block;
  width: 5px;
  height: 9px;
  margin: 0 0 0 4px;
  border: solid #000;
  border-width: 0 2px 2px 0;
  transform: rotate(35deg);
}
.sym { width: 16px; height: 16px; flex: none; margin: 0 6px 0 6px; display: flex; align-items: center; justify-content: center; }
.sym svg { width: 8px; height: 8px; }
.sym.box { border: 1px solid #777; }
.sym.black { background: #000; }
.sym.line::before { content: ""; width: 16px; height: 1px; background: #888; }
.sel { background: #308cc6; color: #fff; text-decoration: underline; text-underline-offset: 2px; }
.bold { font-weight: 700; letter-spacing: -.5px; }
.dim { font-weight: 700; font-style: italic; color: #bebebe; letter-spacing: -.2px; }
.row.sub .dim { letter-spacing: .2px; }
.dim.wide { letter-spacing: .35px; }
.bold.wide { letter-spacing: .2px; }

.map { flex: 1; margin-left: 6px; background: #fff; border: solid #b0aba6; border-width: 1px 1px 0; overflow: hidden; }
.map > svg { width: 1124px; height: 338px; }
.thin, .border { fill: none; stroke: #222; stroke-width: 1.100; stroke-linejoin: round; }
.thin { stroke: #555; stroke-width: .9; }
.labels { font-size: 12.500px; }

.dialog {
  position: absolute;
  left: 464px;
  top: 194px;
  width: 440px;
  height: 210px;
  display: flex;
  flex-direction: column;
  border-radius: 6px 6px 0 0;
  background: #efebe7;
  box-shadow: 0 4px 16px 2px rgba(0, 0, 0, .5);
}
.dialog-title {
  height: 30px;
  flex: none;
  display: flex;
  align-items: center;
  justify-content: space-between;
  padding: 0 6px 0 22px;
  border-radius: 6px 6px 0 0;
  background: linear-gradient(#5b584f, #403e39);
  color: #dfdbd2;
  font-size: 16.5px;
  font-weight: 700;
  letter-spacing: .12px;
  white-space: nowrap;
}
.dialog-title span { width: 395px; }
.dialog-title svg { width: 16px; height: 16px; }
.dialog-body { flex: 1; display: flex; flex-direction: column; padding: 11px 11px 11px; }
.dialog-body p { margin: 0 0 6px; line-height: 17px; white-space: nowrap; letter-spacing: .02px; }
.combo {
  height: 25px;
  display: flex;
  align-items: center;
  justify-content: space-between;
  padding: 0 6px 0 4px;
  border: 1px solid #aaa6a1;
  border-radius: 3px;
  background: linear-gradient(#fff, #ebe8e5);
}
.combo svg { width: 9px; height: 5px; }
.buttons { margin-top: auto; display: flex; justify-content: flex-end; gap: 6px; }
.btn {
  width: 83px;
  height: 25px;
  display: flex;
  align-items: center;
  justify-content: center;
  gap: 3px;
  padding-right: 2px;
  border: 1px solid #aaa6a1;
  border-radius: 3px;
  background: linear-gradient(#fefefe, #ebe8e5);
}
.btn svg { width: 13px; height: 13px; }
.ok { width: 80px; gap: 1px; padding-right: 2px; border-color: #2d78a8; background: linear-gradient(#fdfefe, #d9e1e6); }
.ok svg { width: 16px; height: 16px; }
```
